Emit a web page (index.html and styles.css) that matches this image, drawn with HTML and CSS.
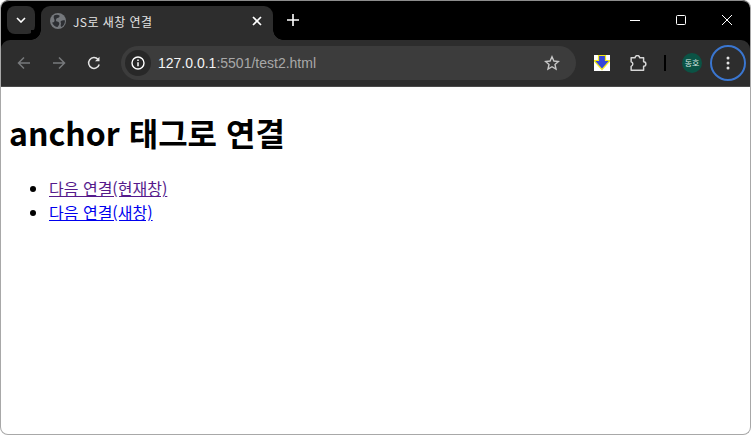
FILE: index.html
```html
<!DOCTYPE html>
<html lang="ko">
<head>
<meta charset="utf-8">
<title>JS로 새창 연결</title>
<link rel="stylesheet" href="styles.css">
</head>
<body>
<div class="window">
  <div class="chrome">
  <header class="titlebar">
    <button class="tabsearch">
      <svg width="10" height="6" viewBox="0 0 10 6"><path d="M1 1l4 4 4-4" fill="none" stroke="#fff" stroke-width="1.6"/></svg>
    </button>
    <div class="tab">
      <svg class="globe" width="16" height="16" viewBox="0 0 16 16"><circle cx="8" cy="8" r="8" fill="#75787c"/><path d="M4 2.500c2-1 4-1 5.500 0 .5 1.500-1 2.500-2 2.500S6 6 6 7.500s2 .5 3 2-.5 3-1.500 4.500c-2 0-4.500-2-5.500-4.500 1.500 0 2.500-.5 2.500-2S3 4.500 4 2.500zM11 8c1.500-1 3-1 4-.5 0 3-1.500 5.500-3.500 6.500-1.500-1-.5-2.500-.5-3.500s-1-1.500 0-2.500z" fill="#2d2f33"/></svg>
      <span class="tabtitle">JS로 새창 연결</span>
      <svg class="tabclose" width="10" height="10" viewBox="0 0 10 10"><path d="M1 1l8 8M9 1l-8 8" stroke="#fff" stroke-width="1.7"/></svg>
    </div>
    <svg class="newtab" width="12" height="12" viewBox="0 0 12 12"><path d="M6 0v12M0 6h12" stroke="#fff" stroke-width="1.6"/></svg>
    <div class="winctl">
      <svg width="10" height="10" viewBox="0 0 10 10"><path d="M0 5.500h10" stroke="#fff"/></svg>
      <svg width="10" height="10" viewBox="0 0 10 10"><rect x=".5" y=".5" width="9" height="9" rx="1" fill="none" stroke="#fff"/></svg>
      <svg width="10" height="10" viewBox="0 0 10 10"><path d="M0 0l10 10M10 0L0 10" stroke="#fff"/></svg>
    </div>
  </header>
  <nav class="toolbar">
    <svg class="navicon" width="16" height="16" viewBox="0 0 16 16"><path d="M14 8H2.500M8 2.500L2.500 8 8 13.500" fill="none" stroke="#77797c" stroke-width="1.500"/></svg>
    <svg class="navicon" width="16" height="16" viewBox="0 0 16 16"><path d="M2 8h11.500M8 2.500L13.500 8 8 13.500" fill="none" stroke="#77797c" stroke-width="1.500"/></svg>
    <svg class="navicon" width="16" height="16" viewBox="0 0 16 16"><path d="M13.200 9.500A5.400 5.400 0 1 1 12 4.300" fill="none" stroke="#e3e3e3" stroke-width="1.500"/><path d="M13.500 1.800v4.500H9z" fill="#e3e3e3"/></svg>
    <div class="omnibox">
      <span class="siteinfo">
        <svg width="14" height="14" viewBox="0 0 14 14"><circle cx="7" cy="7" r="6" fill="none" stroke="#fff" stroke-width="1.400"/><path d="M7 6.200v4M7 3.600v1.500" stroke="#fff" stroke-width="1.500"/></svg>
      </span>
      <span class="url"><span class="host">127.0.0.1</span>:5501/test2.html</span>
      <svg class="star" width="16" height="16" viewBox="0 0 16 16"><path d="M8 1.800l1.900 4.200 4.500.5-3.400 3 1 4.500L8 11.700 4 14l1-4.500-3.400-3 4.500-.5z" fill="none" stroke="#c7c7c7" stroke-width="1.400"/></svg>
    </div>
    <span class="extbox">
      <svg width="16" height="16" viewBox="0 0 16 16"><rect width="16" height="16" fill="#fff"/><path d="M4.500 .5h7v5H16L8 14.500 0 5.500h4.500z" fill="#3546d8" stroke="#f2e817" stroke-width="1.200"/></svg>
    </span>
    <svg class="puzzle" width="17" height="17" viewBox="1 1.500 15 15"><path d="M2 4h3.500a2 2 0 0 1 4 0H13v3.500a2 2 0 0 1 0 4V15H2v-3.500a2.200 2.200 0 0 0 1.500-2 2.200 2.200 0 0 0-1.500-2z" fill="none" stroke="#d6d6d6" stroke-width="1.300" stroke-linejoin="round"/></svg>
    <span class="sep"></span>
    <span class="avatar">동호</span>
    <span class="menu">
      <svg width="4" height="14" viewBox="0 0 4 14"><circle cx="2" cy="2" r="1.500" fill="#e3e3e3"/><circle cx="2" cy="7" r="1.500" fill="#e3e3e3"/><circle cx="2" cy="12" r="1.500" fill="#e3e3e3"/></svg>
    </span>
  </nav>
  </div>
  <main class="page">
    <h1>anchor 태그로 연결</h1>
    <ul>
      <li><a class="visited" href="#a">다음 연결(현재창)</a></li>
      <li><a href="#b">다음 연결(새창)</a></li>
    </ul>
  </main>
</div>
</body>
</html>
```
FILE: styles.css
```css
* { box-sizing: border-box; }
html, body { margin: 0; height: 100%; background: #fff; }
.window {
  width: 751px; height: 435px;
  display: flex; flex-direction: column;
  border: 1px solid #a8a8a8; border-top: 0;
  border-radius: 8px; overflow: hidden;
  background: #fff;
}
.chrome { background: #000; flex: none; border-radius: 8px 8px 0 0; }
.titlebar {
  height: 40px; background: #000;
  display: flex; align-items: flex-start;
  border-top: 1px solid #8c8c8c;
  border-radius: 8px 8px 0 0;
  padding-left: 6px;
}
.tabsearch {
  width: 28px; height: 28px; margin-top: 5px; padding: 0;
  border: 0; border-radius: 8px; background: #2d2d2d;
  display: flex; align-items: center; justify-content: center;
}
.tab {
  width: 232px; height: 34px; margin: 5px 0 0 6px;
  background: #2d2d2d; border-radius: 9px 9px 0 0;
  display: flex; align-items: center; padding: 0 11px 0 9px; gap: 7px;
  color: #e3e3e3; position: relative;
}
.tab::after {
  content: ""; position: absolute; right: -10px; bottom: 0;
  width: 10px; height: 10px;
  background: radial-gradient(circle at 100% 0, #000 9.500px, #2d2d2d 10px);
}
.tab::before {
  content: ""; position: absolute; left: -10px; bottom: 0;
  width: 10px; height: 10px;
  background: radial-gradient(circle at 0 0, #000 9.500px, #2d2d2d 10px);
}
.globe { margin-bottom: 5px; flex: none; }
.tabtitle {
  flex: 1; margin-bottom: 3px; font: 12px "Noto Sans CJK KR", "Noto Sans", sans-serif; letter-spacing: .45px;
}
.tabclose { margin-bottom: 4px; flex: none; }
.newtab { margin: 13px 0 0 14px; }
.winctl { margin-left: auto; display: flex; gap: 36px; padding: 14px 18px 0 0; }
.toolbar {
  height: 47px; background: #2d2d2d;
  border-radius: 9px 9px 0 0;
  display: flex; align-items: center; padding-left: 15px;
  border-bottom: 1px solid #4a4a4a;
}
.navicon { margin-right: 19px; flex: none; }
.omnibox {
  width: 455px; height: 34px; border-radius: 17px; background: #3c3c3c;
  display: flex; align-items: center; padding: 0 16px 0 4px;
}
.siteinfo {
  width: 26px; height: 26px; border-radius: 50%; background: #282828;
  display: flex; align-items: center; justify-content: center; flex: none;
}
.url {
  flex: 1; margin-left: 7px; font: 14px "Liberation Sans", Arial, sans-serif; color: #a8a8a8;
}
.host { color: #f4f4f4; }
.extbox { margin-left: 18px; display: flex; width: 16px; height: 16px; }
.puzzle { margin-left: 20px; flex: none; }
.sep { width: 2px; height: 16px; background: #000; margin-left: 17px; flex: none; }
.avatar {
  width: 20px; height: 20px; border-radius: 50%; background: #0b5345; margin-left: 16px;
  color: #d7e6e1; font: 8px/20px "Noto Sans CJK KR", sans-serif; text-align: center; flex: none;
}
.menu {
  width: 36px; height: 36px; border-radius: 50%; border: 2px solid #3a76d0;
  margin-left: 8px; display: flex; align-items: center; justify-content: center; flex: none;
}
.page { flex: 1; padding: 8px; font: 16px/24px "Noto Sans CJK KR", "Noto Sans", sans-serif; color: #000; }
h1 { font: 700 32px/46px "Noto Sans CJK KR", "Noto Sans", sans-serif; margin: 14px 0 21px; }
ul { margin: 0; padding-left: 40px; }
a { color: #0000ee; }
a.visited { color: #551a8b; }
```
